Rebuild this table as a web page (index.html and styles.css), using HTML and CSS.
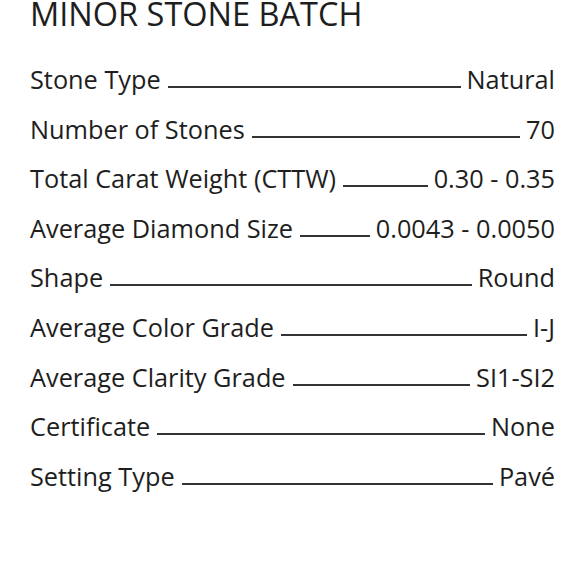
FILE: index.html
```html
<!DOCTYPE html>
<html>
<head>
<meta charset="utf-8">
<link rel="stylesheet" href="styles.css">
</head>
<body>
<div class="sheet">
  <h1 class="title">MINOR STONE BATCH</h1>
  <div class="specs">
    <div class="row"><span class="label">Stone Type</span><span class="leader"></span><span class="value">Natural</span></div>
    <div class="row"><span class="label">Number of Stones</span><span class="leader"></span><span class="value">70</span></div>
    <div class="row"><span class="label">Total Carat Weight (CTTW)</span><span class="leader"></span><span class="value">0.30 - 0.35</span></div>
    <div class="row"><span class="label">Average Diamond Size</span><span class="leader"></span><span class="value">0.0043 - 0.0050</span></div>
    <div class="row"><span class="label">Shape</span><span class="leader"></span><span class="value">Round</span></div>
    <div class="row"><span class="label">Average Color Grade</span><span class="leader"></span><span class="value">I-J</span></div>
    <div class="row"><span class="label">Average Clarity Grade</span><span class="leader"></span><span class="value">SI1-SI2</span></div>
    <div class="row"><span class="label">Certificate</span><span class="leader"></span><span class="value">None</span></div>
    <div class="row"><span class="label">Setting Type</span><span class="leader"></span><span class="value">Pavé</span></div>
  </div>
</div>
</body>
</html>
```
FILE: styles.css
```css
html, body {
  margin: 0;
  padding: 0;
  background: #ffffff;
}
body {
  font-family: "Open Sans", "DejaVu Sans", sans-serif;
  color: #1e1e1e;
}
.sheet {
  padding: 0 25px 0 30px;
}
.title {
  margin: -4px 0 0 0;
  font-size: 32.5px;
  font-weight: 400;
  line-height: 36px;
  height: 59px;
  letter-spacing: 0;
}
.specs {
  display: flex;
  flex-direction: column;
}
.row {
  display: flex;
  align-items: baseline;
  height: 49.6px;
  line-height: 49.6px;
  font-size: 25.3px;
}
.label, .value {
  white-space: nowrap;
}
.leader {
  flex: 1;
  height: 0;
  border-bottom: 2px solid #333333;
  margin: 0 6px 0 7px;
  position: relative;
  top: -1px;
}
```
